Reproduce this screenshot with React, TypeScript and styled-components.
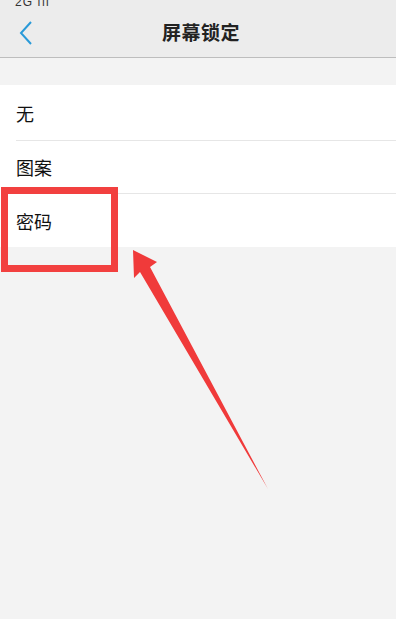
import React from 'react';
import styled, { createGlobalStyle } from 'styled-components';

const GlobalStyle = createGlobalStyle`
    html, body {
        margin: 0;
        padding: 0;
        background: #f3f3f3;
    }
    body {
        font-family: "Noto Sans CJK SC", "Noto Sans", sans-serif;
    }
`;

const Page = styled.div`
    position: relative;
    width: 396px;
    height: 619px;
    background: #f3f3f3;
    overflow: hidden;
`;

const StatusBar = styled.div`
    height: 6px;
    background: #ececec;
    overflow: hidden;
    display: flex;
    align-items: flex-end;
    padding-left: 15px;
`;

const StatusText = styled.span`
    font-family: "Liberation Sans", sans-serif;
    font-size: 12px;
    line-height: 12px;
    color: #333;
    margin-bottom: -2px;
    letter-spacing: 1px;
`;

const Header = styled.div`
    height: 51px;
    background: #ececec;
    border-bottom: 1px solid #bdbdbd;
    display: flex;
    align-items: center;
    justify-content: center;
    padding-left: 6px;
    position: relative;
`;

const BackButton = styled.div`
    position: absolute;
    left: 18px;
    top: 14px;
    width: 16px;
    height: 26px;
    display: flex;
`;

const Title = styled.h1`
    margin: 0;
    font-size: 19px;
    font-weight: 700;
    color: #222;
    letter-spacing: 0.5px;
`;

const Spacer = styled.div`
    height: 27px;
`;

const List = styled.div`
    background: #fff;
`;

const Row = styled.div<{ $height: number; $divider?: boolean }>`
    height: ${(p) => p.$height}px;
    margin-left: 16px;
    display: flex;
    align-items: center;
    font-size: 18px;
    color: #111;
    box-sizing: border-box;
    border-bottom: ${(p) => (p.$divider ? '1px solid #e6e6e6' : 'none')};
`;

const HighlightBox = styled.div`
    position: absolute;
    left: 1px;
    top: 187px;
    width: 117px;
    height: 85px;
    border: 7px solid #f2403f;
    box-sizing: border-box;
`;

const ArrowLayer = styled.svg`
    position: absolute;
    left: 0;
    top: 0;
    pointer-events: none;
`;

const App = () => (
    <Page>
        <GlobalStyle />
        <StatusBar>
            <StatusText>2G ııl</StatusText>
        </StatusBar>
        <Header>
            <BackButton>
                <svg width="16" height="26" viewBox="0 0 16 26">
                    <path d="M13 2 L3 13 L13 24" fill="none" stroke="#2a9ad8" strokeWidth="2" />
                </svg>
            </BackButton>
            <Title>屏幕锁定</Title>
        </Header>
        <Spacer />
        <List>
            <Row $height={56} $divider>无</Row>
            <Row $height={53} $divider>图案</Row>
            <Row $height={53}>密码</Row>
        </List>
        <HighlightBox />
        <ArrowLayer width="396" height="619" viewBox="0 0 396 619">
            <polygon
                points="133,250 157,262 150,267 268,489 140,272 134,278"
                fill="#f03a3a"
            />
        </ArrowLayer>
    </Page>
);

export default App;
